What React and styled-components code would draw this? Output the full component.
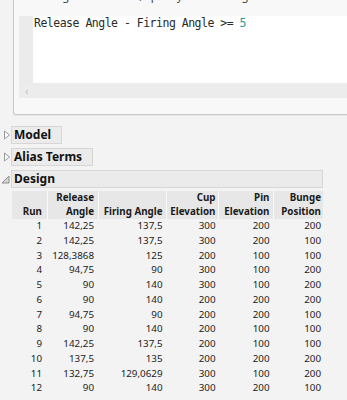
import React from "react";
import styled, { createGlobalStyle } from "styled-components";

const Global = createGlobalStyle`
  html, body { margin: 0; padding: 0; }
  body {
    background: #f3f3f3;
    overflow: hidden;
    font-family: "Noto Sans", "Open Sans", sans-serif;
    color: #333;
  }
`;

const Page = styled.div`
  width: 347px;
  height: 400px;
  overflow: hidden;
`;

const Panel = styled.div`
  margin: -12px -12px 0 13px;
  border: 1px solid #c9c9c9;
  border-right: none;
  border-radius: 0 0 0 3px;
  background: #f8f8f8;
  padding: 0 0 16px 5px;
  box-shadow: 0 1px 1px rgba(0, 0, 0, 0.06);
`;

const Hint = styled.div`
  font-size: 11.5px;
  line-height: 14px;
  color: #444;
  white-space: nowrap;
  margin-bottom: 13px;
`;

const Editor = styled.div`
  display: grid;
  grid-template-columns: 14px 1fr;
  grid-template-rows: 67px 15px;
`;

const Gutter = styled.div`
  background: #ebebeb;
`;

const Code = styled.div`
  background: #fff;
  padding-left: 1px;
  font-family: "DejaVu Sans Mono", monospace;
  font-size: 11.5px;
  letter-spacing: -0.5px;
  line-height: 14px;
  color: #2a2a2a;
  white-space: pre;
`;

const Num = styled.span`
  color: #2a9a9a;
`;

const HScroll = styled.div`
  grid-column: 1 / 3;
  background: #ececec;
  display: flex;
  align-items: center;
  padding-left: 6px;
  color: #c4c4c4;
  font-size: 11px;
`;

const Sections = styled.div`
  margin-top: 11px;
  display: flex;
  flex-direction: column;
  gap: 4px;
`;

const SectionHead = styled.div`
  display: flex;
  align-items: center;
  height: 18px;
`;

const Toggle = styled.div`
  width: 11px;
  height: 18px;
  display: flex;
  align-items: center;
`;

const Title = styled.div`
  box-sizing: border-box;
  height: 18px;
  ${(p) => (p.$wide ? "width: 312px;" : "")}
  border: 1px solid #d6d6d6;
  background: #ebebeb;
  padding: 0 10px 0 2px;
  font-weight: 700;
  font-size: 12px;
  line-height: 16px;
  color: #111;
  white-space: nowrap;
`;

const Table = styled.div`
  margin: 3px 0 0 12px;
  display: grid;
  grid-template-columns: 35px 51px 68px 52px 55px 50px;
  font-size: 9.8px;
  color: #222;
`;

const HeadCell = styled.div`
  box-sizing: border-box;
  height: 28px;
  background: #e7e7e7;
  ${(p) => (p.$first ? "" : "border-left: 1.5px solid #fafafa;")}
  padding-right: ${(p) => p.$pad}px;
  display: flex;
  align-items: flex-end;
  justify-content: flex-end;
  text-align: right;
  font-weight: 700;
  line-height: 14px;
  color: #1a1a1a;
  white-space: nowrap;
`;

const Cell = styled.div`
  box-sizing: border-box;
  padding-right: ${(p) => p.$pad}px;
  text-align: right;
  line-height: 14.75px;
  height: 14.75px;
  white-space: nowrap;
`;

const Body = styled.div`
  display: contents;
`;

const ClosedTri = () => (
  <svg width="8" height="10" viewBox="0 0 8 10" style={{ marginLeft: 3 }}>
    <path d="M1.5 1 L6.5 5 L1.5 9 Z" fill="#fff" stroke="#9a9a9a" strokeWidth="1" />
  </svg>
);

const OpenTri = () => (
  <svg width="9" height="9" viewBox="0 0 9 9" style={{ marginLeft: 1 }}>
    <path d="M8 1 L8 8 L1 8 Z" fill="#d6d6d6" stroke="#8f8f8f" strokeWidth="1" strokeLinejoin="round" />
  </svg>
);

const pads = [5, 4, 3.5, 2.5, 3.5, 2];

const headers = [
  ["Run"],
  ["Release", "Angle"],
  ["Firing Angle"],
  ["Cup", "Elevation"],
  ["Pin", "Elevation"],
  ["Bunge", "Position"],
];

const rows = [
  ["1", "142,25", "137,5", "300", "200", "200"],
  ["2", "142,25", "137,5", "300", "200", "100"],
  ["3", "128,3868", "125", "200", "100", "100"],
  ["4", "94,75", "90", "300", "100", "200"],
  ["5", "90", "140", "300", "100", "200"],
  ["6", "90", "140", "200", "200", "200"],
  ["7", "94,75", "90", "200", "200", "100"],
  ["8", "90", "140", "200", "100", "100"],
  ["9", "142,25", "137,5", "200", "100", "100"],
  ["10", "137,5", "135", "200", "200", "200"],
  ["11", "132,75", "129,0629", "300", "100", "200"],
  ["12", "90", "140", "300", "200", "100"],
];

export default function App() {
  return (
    <Page>
      <Global />
      <Panel>
        <Hint>For categorical factors, specify levels using their Ordinal values.</Hint>
        <Editor>
          <Gutter />
          <Code>
            Release Angle - Firing Angle &gt;= <Num>5</Num>
          </Code>
          <HScroll>‹</HScroll>
        </Editor>
      </Panel>
      <Sections>
        <SectionHead>
          <Toggle><ClosedTri /></Toggle>
          <Title>Model</Title>
        </SectionHead>
        <SectionHead>
          <Toggle><ClosedTri /></Toggle>
          <Title>Alias Terms</Title>
        </SectionHead>
        <div>
          <SectionHead>
            <Toggle><OpenTri /></Toggle>
            <Title $wide>Design</Title>
          </SectionHead>
          <Table>
            {headers.map((h, i) => (
              <HeadCell key={i} $first={i === 0} $pad={pads[i]}>
                <div>
                  {h.map((line, j) => (
                    <div key={j}>{line}</div>
                  ))}
                </div>
              </HeadCell>
            ))}
            <Body>
              {rows.map((r, ri) =>
                r.map((v, ci) => (
                  <Cell key={ri + "-" + ci} $pad={pads[ci]}>
                    {v}
                  </Cell>
                ))
              )}
            </Body>
          </Table>
        </div>
      </Sections>
    </Page>
  );
}
